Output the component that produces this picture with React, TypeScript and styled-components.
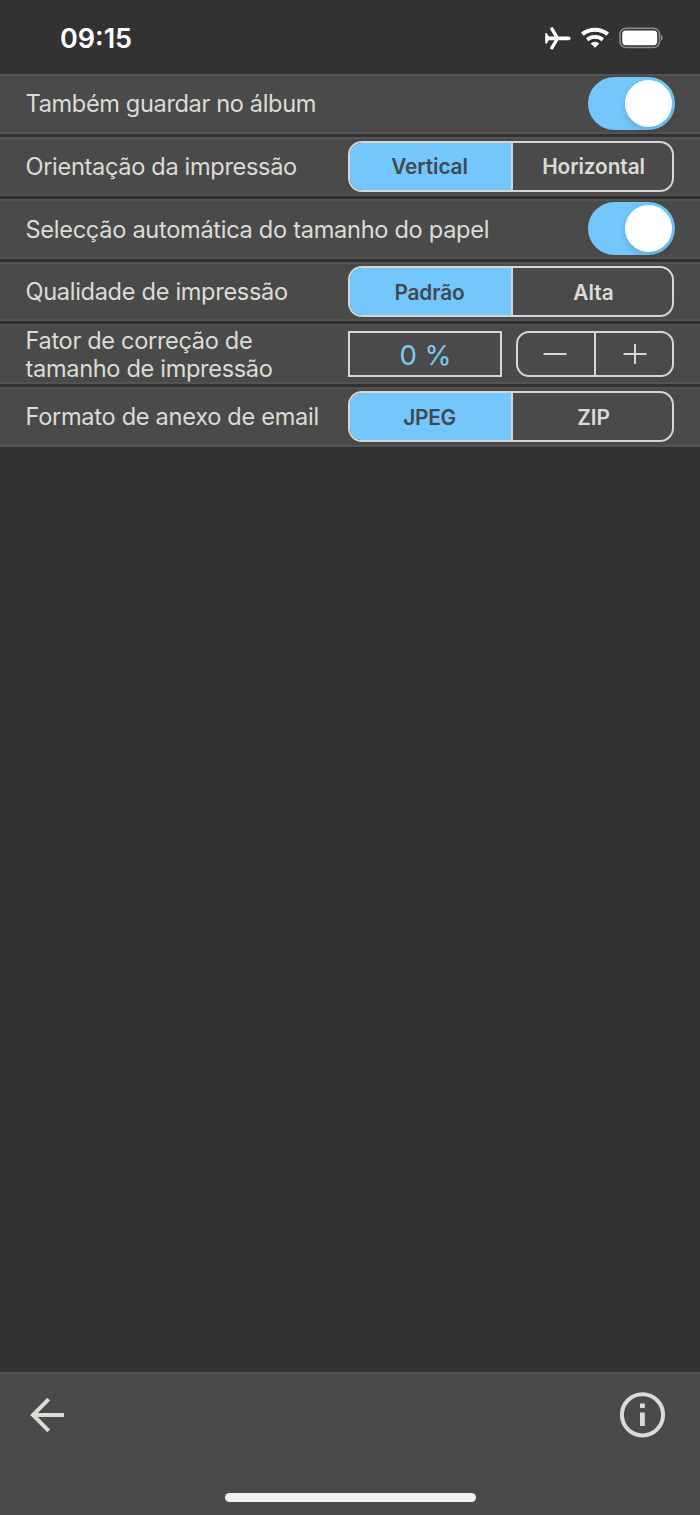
import React, { useState } from "react";
import styled, { createGlobalStyle } from "styled-components";

const Global = createGlobalStyle`
  * { box-sizing: border-box; }
  body { margin: 0; background: #323232; font-family: Inter, "Liberation Sans", sans-serif; -webkit-font-smoothing: antialiased; }
  button { font: inherit; color: inherit; background: none; border: 0; padding: 0; margin: 0; }
`;

const line = "#d6d6d3";
const blue = "#74c7fc";

const Screen = styled.main`
  width: 700px;
  height: 1515px;
  display: flex;
  flex-direction: column;
  background: #323232;
  overflow: hidden;
`;

const StatusBar = styled.header`
  height: 74px;
  flex: none;
  display: flex;
  align-items: center;
  justify-content: space-between;
  padding: 2px 37px 0 60px;
  color: #fff;
`;

const Time = styled.time`
  font-size: 27px;
  font-weight: 600;
  line-height: 32px;
  padding-top: 2px;
`;

const StatusIcons = styled.svg`
  width: 119px;
  height: 24px;
  display: block;
`;

const Settings = styled.section`
  display: flex;
  flex-direction: column;
  gap: 3px;
  flex: 1;
`;

const Row = styled.div`
  height: 59.6px;
  flex: none;
  display: flex;
  align-items: center;
  justify-content: space-between;
  padding: 0 26px 0 25.5px;
  background: #4a4a4a;
  box-shadow: inset 0 2px #535353, inset 0 -2px #535353;
`;

const Label = styled.div`
  display: flex;
  flex-direction: column;
  padding-top: 1.4px;
  color: #dcdcd6;
  white-space: nowrap;
`;

const LabelLine = styled.span<{ $spacing: number }>`
  font-size: 23.6px;
  font-weight: 400;
  line-height: 28px;
  letter-spacing: ${(p) => p.$spacing}px;
`;

const Switch = styled.button`
  width: 87px;
  height: 53px;
  padding: 0 3px;
  border-radius: 27px;
  background: ${blue};
  display: flex;
  align-items: center;
  justify-content: flex-end;
  margin-right: -1px;
`;

const Knob = styled.span`
  width: 47px;
  height: 47px;
  border-radius: 50%;
  background: #fff;
  box-shadow: 0 3px 8px rgba(0, 0, 0, 0.15);
`;

const Segments = styled.div`
  width: 326px;
  height: 51px;
  display: grid;
  grid-template-columns: 161px 1fr;
  border: 2px solid ${line};
  border-radius: 14px;
  overflow: hidden;
`;

const Segment = styled.button<{ $active: boolean; $spacing: number }>`
  padding: 1px 2px 0 0;
  font-size: 20.8px;
  font-weight: 600;
  letter-spacing: ${(p) => p.$spacing}px;
  color: ${(p) => (p.$active ? "#3f4a50" : "#dcdcd6")};
  background: ${(p) => (p.$active ? blue : "transparent")};
  & + & { border-left: 2px solid ${line}; padding: 1px 0 0 2px; }
`;

const Adjuster = styled.div`
  width: 326px;
  display: flex;
  justify-content: space-between;
`;

const Value = styled.output`
  width: 154px;
  height: 46px;
  border: 2px solid ${line};
  display: flex;
  align-items: center;
  justify-content: center;
  padding: 1px 0 0 1px;
  color: #7bcbf5;
  font-size: 27.5px;
`;

const Stepper = styled.div`
  width: 158px;
  height: 46px;
  display: grid;
  grid-template-columns: 76px 1fr;
  border: 2px solid ${line};
  border-radius: 13px;
`;

const Step = styled.button`
  display: flex;
  align-items: center;
  justify-content: center;
  padding-right: 2px;
  & + & { border-left: 2px solid ${line}; padding: 0 0 0 1px; }
`;

const Toolbar = styled.footer`
  height: 143px;
  flex: none;
  display: flex;
  flex-direction: column;
  align-items: center;
  justify-content: space-between;
  padding: 19px 34px 13px 29px;
  background: #4a4a4a;
  box-shadow: inset 0 2px #535353;
`;

const Actions = styled.nav`
  width: 100%;
  display: flex;
  align-items: center;
  justify-content: space-between;
  svg { display: block; }
`;

const HomeIndicator = styled.div`
  width: 251px;
  height: 9px;
  border-radius: 5px;
  background: #f3f3f3;
  margin-left: 5px;
`;

type Text = [string, number];

function Choice({ options }: { options: Text[] }) {
  const [active, setActive] = useState(0);
  return (
    <Segments>
      {options.map(([text, spacing], i) => (
        <Segment key={text} $active={i === active} $spacing={spacing} onClick={() => setActive(i)}>
          {text}
        </Segment>
      ))}
    </Segments>
  );
}

function Setting({ lines, children }: { lines: Text[]; children: React.ReactNode }) {
  return (
    <Row>
      <Label>
        {lines.map(([text, spacing]) => (
          <LabelLine key={text} $spacing={spacing}>{text}</LabelLine>
        ))}
      </Label>
      {children}
    </Row>
  );
}

export default function App() {
  const [value, setValue] = useState(0);
  return (
    <Screen>
      <Global />
      <StatusBar>
        <Time>09:15</Time>
        <StatusIcons viewBox="0 0 119 24" fill="none">
          <g stroke="#fff" strokeLinecap="round" strokeLinejoin="round">
            <path d="M4 12.3H24.6" strokeWidth="3.8" />
            <path d="M7.9 2.8L13.5 12.3L7.9 21.8" strokeWidth="3.3" />
            <path d="M2.2 8L4.6 12.3L2.2 16.6Z" fill="#fff" strokeWidth="2" />
          </g>
          <path d="M38.3 8.2A20.4 20.4 0 0 1 63.7 8.2" stroke="#fff" strokeWidth="4.2" />
          <path d="M43.2 13.7A12.4 12.4 0 0 1 58.8 13.7" stroke="#fff" strokeWidth="3.8" />
          <path d="M46.7 17.5Q51 14.1 55.3 17.5L51 21.7Z" fill="#fff" />
          <rect x="76" y="2.3" width="39.5" height="19.2" rx="6" stroke="#8c8c8c" strokeWidth="1.6" />
          <rect x="78.2" y="4.5" width="35" height="14.8" rx="3.7" fill="#fff" />
          <path d="M116.9 8.8Q118.7 9.6 118.7 11.8T116.9 14.8Z" fill="#8c8c8c" />
        </StatusIcons>
      </StatusBar>

      <Settings>
        <Setting lines={[["Também guardar no álbum", -0.37]]}>
          <Switch aria-label="Também guardar no álbum"><Knob /></Switch>
        </Setting>
        <Setting lines={[["Orientação da impressão", -0.34]]}>
          <Choice options={[["Vertical", -0.08], ["Horizontal", -0.1]]} />
        </Setting>
        <Setting lines={[["Selecção automática do tamanho do papel", -0.3]]}>
          <Switch aria-label="Selecção automática"><Knob /></Switch>
        </Setting>
        <Setting lines={[["Qualidade de impressão", -0.32]]}>
          <Choice options={[["Padrão", -0.1], ["Alta", 0]]} />
        </Setting>
        <Setting lines={[["Fator de correção de", -0.34], ["tamanho de impressão", -0.34]]}>
          <Adjuster>
            <Value>{value} %</Value>
            <Stepper>
              <Step aria-label="Menos" onClick={() => setValue(value - 1)}>
                <svg width="24" height="24" stroke={line} strokeWidth="2"><path d="M0.5 12H23.5" /></svg>
              </Step>
              <Step aria-label="Mais" onClick={() => setValue(value + 1)}>
                <svg width="24" height="24" stroke={line} strokeWidth="2"><path d="M0.5 12H23.5M12 2V22" /></svg>
              </Step>
            </Stepper>
          </Adjuster>
        </Setting>
        <Setting lines={[["Formato de anexo de email", -0.3]]}>
          <Choice options={[["JPEG", -0.3], ["ZIP", 0]]} />
        </Setting>
      </Settings>

      <Toolbar>
        <Actions>
          <button aria-label="Voltar">
            <svg width="37" height="36" fill="none" stroke="#dcdcd6" strokeWidth="4">
              <path d="M19.7 2.2L4 18L19.7 33.8M4 18H35" />
            </svg>
          </button>
          <button aria-label="Informações">
            <svg width="47" height="47" fill="none">
              <circle cx="23.5" cy="23.8" r="20.6" stroke="#dcdcd6" strokeWidth="4" />
              <path d="M21 12.5H25.8V17H21ZM21 21.5H25.8V35H21Z" fill="#dcdcd6" />
            </svg>
          </button>
        </Actions>
        <HomeIndicator />
      </Toolbar>
    </Screen>
  );
}
